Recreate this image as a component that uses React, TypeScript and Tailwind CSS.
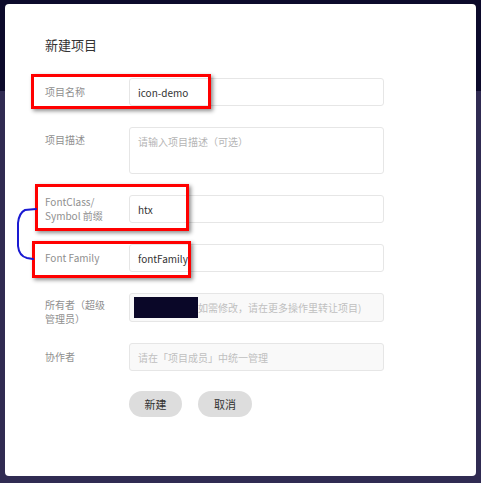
import React from "react";

const font = { fontFamily: '"Noto Sans CJK SC", "Noto Sans", sans-serif' };

const Row = ({ label, top, children }: { label: React.ReactNode; top?: boolean; children: React.ReactNode }) => (
  <div className={`flex ${top ? "items-start" : "items-center"}`}>
    <div className={`w-[84px] shrink-0 text-[10px] leading-[14px] text-[#8f8f8f] ${top ? "pt-[6px]" : ""}`}>{label}</div>
    {children}
  </div>
);

const RedBox = ({ cls }: { cls: string }) => (
  <div className={`absolute border-[3px] border-[#ff0000] shadow-[2px_2px_4px_rgba(0,0,0,0.45)] pointer-events-none ${cls}`} />
);

export default function App() {
  return (
    <div
      className="relative w-[481px] h-[483px] overflow-hidden bg-[linear-gradient(to_bottom,#0c0a2b_91px,#302b52_91px)] pt-[4px] pl-[5px]"
      style={font}
    >
      <div className="w-[471px] h-[472px] rounded-[4px] bg-white pt-[32px] pl-[40px]">
        <h1 className="text-[13px] leading-[18px] text-[#333] mb-[24px]">新建项目</h1>

        <div className="flex flex-col gap-[21px]">
          <Row label="项目名称">
            <div className="w-[255px] h-[28px] rounded-[3px] border border-[#e6e6e6] px-[8px] flex items-center text-[10px] text-[#333]">
              icon-demo
            </div>
          </Row>
          <Row label="项目描述" top>
            <div className="w-[255px] h-[47px] rounded-[3px] border border-[#e6e6e6] px-[8px] pt-[6px] text-[10px] text-[#b5b5b5]">
              请输入项目描述（可选）
            </div>
          </Row>
          <Row label={<>FontClass/<br />Symbol 前缀</>}>
            <div className="w-[255px] h-[28px] rounded-[3px] border border-[#e6e6e6] px-[8px] flex items-center text-[10px] text-[#333]">
              htx
            </div>
          </Row>
          <Row label="Font Family">
            <div className="w-[255px] h-[28px] rounded-[3px] border border-[#e6e6e6] px-[8px] flex items-center text-[10px] text-[#333]">
              fontFamily
            </div>
          </Row>
          <Row label={<div className="h-[29px] pt-[5px] whitespace-nowrap">所有者（超级<br />管理员）</div>}>
            <div className="w-[255px] h-[29px] rounded-[3px] border border-[#e6e6e6] bg-[#f9f9f9] pl-[4px] flex items-center text-[10px] text-[#c0c0c0]">
              <span className="w-[64px] h-[21px] bg-[#0a0728] shrink-0" />
              <span>如需修改，请在更多操作里转让项目)</span>
            </div>
          </Row>
          <Row label="协作者">
            <div className="w-[255px] h-[28px] rounded-[3px] border border-[#e6e6e6] bg-[#f9f9f9] px-[8px] flex items-center text-[10px] text-[#c0c0c0]">
              请在「项目成员」中统一管理
            </div>
          </Row>
          <div className="flex pl-[84px] gap-[16px] -mt-[1px]">
            <button className="w-[53px] h-[26px] rounded-full bg-[#dddddd] text-[11px] text-[#333]">新建</button>
            <button className="w-[54px] h-[26px] rounded-full bg-[#dddddd] text-[11px] text-[#333]">取消</button>
          </div>
        </div>
      </div>

      <RedBox cls="left-[31px] top-[74px] w-[180px] h-[35px]" />
      <RedBox cls="left-[35px] top-[184px] w-[154px] h-[47px]" />
      <RedBox cls="left-[32px] top-[241px] w-[159px] h-[37px]" />

      <svg className="absolute left-0 top-0 pointer-events-none" width="60" height="280" viewBox="0 0 60 280">
        <path
          d="M36 209 L25 210 Q19 213 18 223 L18 246 Q19 256 27 258 L33 259"
          fill="none"
          stroke="#1a1ad2"
          strokeWidth="2"
          strokeLinecap="round"
        />
      </svg>
    </div>
  );
}
